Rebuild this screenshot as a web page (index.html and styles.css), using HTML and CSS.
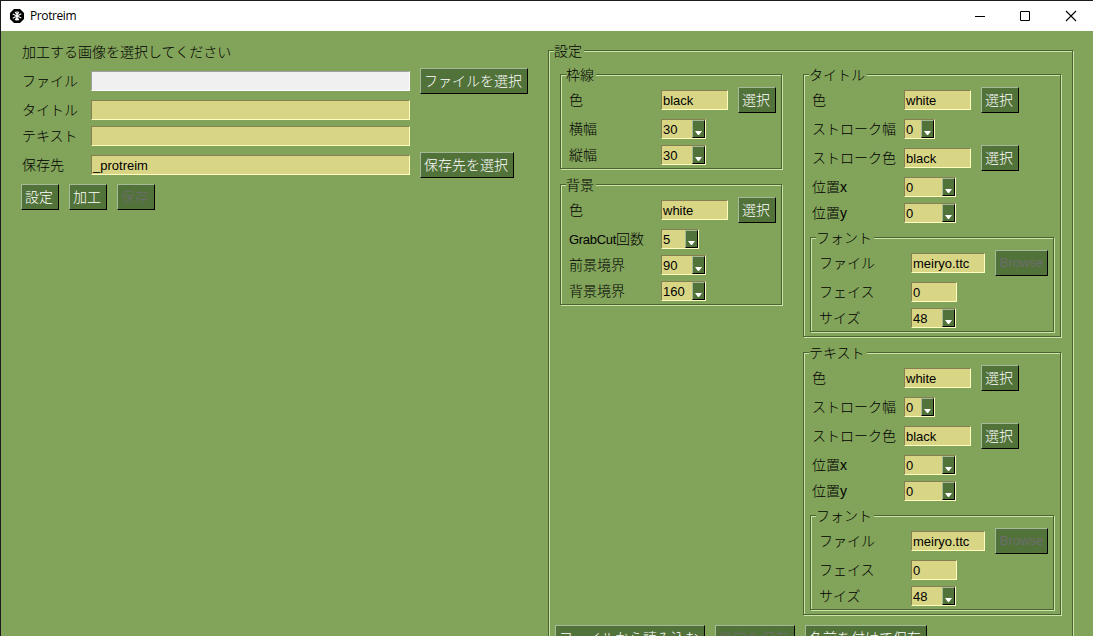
FILE: index.html
```html
<!DOCTYPE html>
<html lang="ja">
<head>
<meta charset="utf-8">
<title>Protreim</title>
<link rel="stylesheet" href="styles.css">
</head>
<body>
<div class="window">
  <header class="titlebar">
    <svg class="logo" width="14" height="14" viewBox="0 0 14 14"><path d="M4 0h6l4 4v6l-4 4H4l-4-4V4z" fill="#000"/><path d="M7 2.200v9.600M2.700 5l8.600 4M2.700 9.200l8.600-4.400M5 2.800l2 3 2-3M5 11.200l2-3 2 3" stroke="#fff" stroke-width="1.100" fill="none"/></svg>
    <span class="app-name">Protreim</span>
    <svg class="controls" width="104" height="12" viewBox="0 0 104 12"><path d="M1 6.500h10M46.500 1.500h9v9h-9z" fill="none" stroke="#000"/><path d="M92 1l10 10M102 1L92 11" stroke="#000" stroke-width="1.100"/></svg>
  </header>
  <main class="content">
    <section class="left">
      <div class="row"><span class="intro">加工する画像を選択してください</span></div>
      <div class="row tall"><span class="label">ファイル</span><div class="field w-main readonly"></div><button class="btn">ファイルを選択</button></div>
      <div class="row"><span class="label">タイトル</span><div class="field w-main"></div></div>
      <div class="row"><span class="label">テキスト</span><div class="field w-main"></div></div>
      <div class="row tall"><span class="label">保存先</span><div class="field w-main">_protreim</div><button class="btn">保存先を選択</button></div>
      <div class="row tall actions"><button class="btn">設定</button><button class="btn">加工</button><button class="btn" disabled>保存</button></div>
    </section>

    <section class="frame settings">
      <div class="legend">設定</div>
      <div class="columns">
        <div class="column">
          <div class="frame group narrow">
            <div class="legend">枠線</div>
            <div class="row tall"><span class="label">色</span><div class="field w-color">black</div><button class="btn">選択</button></div>
            <div class="row"><span class="label">横幅</span><div class="field w-2">30<i class="drop"></i></div></div>
            <div class="row"><span class="label">縦幅</span><div class="field w-2">30<i class="drop"></i></div></div>
          </div>
          <div class="frame group narrow">
            <div class="legend">背景</div>
            <div class="row tall"><span class="label">色</span><div class="field w-color">white</div><button class="btn">選択</button></div>
            <div class="row"><span class="label"><span class="latin">GrabCut</span>回数</span><div class="field w-1">5<i class="drop"></i></div></div>
            <div class="row"><span class="label">前景境界</span><div class="field w-2">90<i class="drop"></i></div></div>
            <div class="row"><span class="label">背景境界</span><div class="field w-2">160<i class="drop"></i></div></div>
          </div>
        </div>
        <div class="column">
          <div class="frame group wide">
            <div class="legend">タイトル</div>
            <div class="row tall"><span class="label">色</span><div class="field w-color">white</div><button class="btn">選択</button></div>
            <div class="row"><span class="label">ストローク幅</span><div class="field w-0">0<i class="drop"></i></div></div>
            <div class="row tall"><span class="label">ストローク色</span><div class="field w-color">black</div><button class="btn">選択</button></div>
            <div class="row"><span class="label">位置x</span><div class="field w-3">0<i class="drop"></i></div></div>
            <div class="row"><span class="label">位置y</span><div class="field w-3">0<i class="drop"></i></div></div>
            <div class="frame group font">
              <div class="legend">フォント</div>
              <div class="row tall"><span class="label">ファイル</span><div class="field w-file">meiryo.ttc</div><button class="btn browse" disabled>Browse</button></div>
              <div class="row"><span class="label">フェイス</span><div class="field w-face">0</div></div>
              <div class="row"><span class="label">サイズ</span><div class="field w-2">48<i class="drop"></i></div></div>
            </div>
          </div>
          <div class="frame group wide">
            <div class="legend">テキスト</div>
            <div class="row tall"><span class="label">色</span><div class="field w-color">white</div><button class="btn">選択</button></div>
            <div class="row"><span class="label">ストローク幅</span><div class="field w-0">0<i class="drop"></i></div></div>
            <div class="row tall"><span class="label">ストローク色</span><div class="field w-color">black</div><button class="btn">選択</button></div>
            <div class="row"><span class="label">位置x</span><div class="field w-3">0<i class="drop"></i></div></div>
            <div class="row"><span class="label">位置y</span><div class="field w-3">0<i class="drop"></i></div></div>
            <div class="frame group font">
              <div class="legend">フォント</div>
              <div class="row tall"><span class="label">ファイル</span><div class="field w-file">meiryo.ttc</div><button class="btn browse" disabled>Browse</button></div>
              <div class="row"><span class="label">フェイス</span><div class="field w-face">0</div></div>
              <div class="row"><span class="label">サイズ</span><div class="field w-2">48<i class="drop"></i></div></div>
            </div>
          </div>
        </div>
      </div>
      <div class="row tall actions file-actions"><button class="btn">ファイルから読み込む</button><button class="btn" disabled>設定を保存</button><button class="btn">名前を付けて保存</button></div>
    </section>
  </main>
</div>
</body>
</html>
```
FILE: styles.css
```css
* { box-sizing: border-box; }
body { margin: 0; overflow: hidden; }

.window {
  display: flex;
  flex-direction: column;
  width: 1093px;
  height: 636px;
  overflow: hidden;
  border: solid #1c1c1c;
  border-width: 1px 0 0 1px;
  background: #82a35a;
  color: #000;
  font: 300 14px/20px "Liberation Sans", "Noto Sans CJK JP", sans-serif;
  white-space: nowrap;
}

.titlebar {
  display: flex;
  flex: none;
  align-items: center;
  height: 30px;
  padding: 0 15px 0 9px;
  background: #fff;
}
.logo { margin-right: 6px; }
.app-name { flex: 1; font: 400 12px/20px "Open Sans", sans-serif; letter-spacing: -0.4px; }

.content { display: flex; align-items: flex-start; }
.left { display: flex; flex: none; flex-direction: column; gap: 6px; width: 547px; padding: 11px 0 0 20px; }
.left .label { width: 70px; }

.row { display: flex; align-items: center; height: 20px; }
.row.tall { height: 26px; }
.row .btn { margin-left: 10px; }
.intro { padding-left: 1px; }
.label { flex: none; width: 93px; padding-left: 1px; }
.latin { font-size: 13px; letter-spacing: -0.3px; }
.row.actions { gap: 10px; }
.row.actions .btn { margin-left: 0; }

.field {
  position: relative;
  flex: none;
  height: 20px;
  padding-left: 1px;
  border: 1px solid;
  border-color: #837f50 #ffffc0 #ffffc0 #837f50;
  background: #d8d584;
  font-size: 13px;
  line-height: 19px;
}
.field.readonly { background: #f0f0f0; border-color: #a0a0a0 #fff #fff #a0a0a0; }
.w-main { width: 319px; }
.w-color { width: 67px; }
.w-file { width: 74px; }
.w-face { width: 46px; }
.w-0 { width: 31px; }
.w-1 { width: 38px; }
.w-2 { width: 45px; }
.w-3 { width: 52px; }

.drop {
  position: absolute;
  top: 0;
  right: 0;
  width: 13px;
  height: 18px;
  border: 1px solid;
  border-color: #a5b897 #000 #000 #a5b897;
  background: #517239;
}
.drop::after {
  content: "";
  position: absolute;
  left: 2px;
  bottom: 2px;
  width: 7px;
  height: 4px;
  background: #fff;
  clip-path: polygon(0 0, 100% 0, 57% 100%, 43% 100%);
}

.btn {
  flex: none;
  height: 26px;
  margin: 0;
  padding: 0 5px 0 3px;
  border: 1px solid;
  border-color: #a5b897 #000 #000 #a5b897;
  background: #517239;
  color: #fff;
  font: 300 14px/20px "Liberation Sans", "Noto Sans CJK JP", sans-serif;
}
.btn:disabled { color: #6d6d6d; }
.btn.browse { width: 53px; padding: 0; font-size: 13px; }

/* Grooved frame: a dark line with a light one offset by a pixel */
.frame {
  position: relative;
  border: 1px solid #4e6236;
  box-shadow: 1px 1px 0 #c8e6a4, inset 1px 1px 0 #c8e6a4;
}
.legend {
  position: absolute;
  top: -10px;
  left: 5px;
  height: 20px;
  padding-right: 2px;
  background: #82a35a;
}
.settings { flex: none; width: 525px; height: 640px; margin-top: 19px; padding: 23px 0 0 11px; }
.columns { display: flex; align-items: flex-start; gap: 21px; }
.column { display: flex; flex-direction: column; gap: 15px; }
.group { display: flex; flex-direction: column; gap: 6px; padding: 12px 0 3px 7px; }
.narrow { width: 222px; }
.wide { width: 258px; padding-bottom: 4px; }
.font { width: 244px; margin: 8px 0 0 -1px; }
.file-actions { margin: 10px 0 0 -5px; }
```
